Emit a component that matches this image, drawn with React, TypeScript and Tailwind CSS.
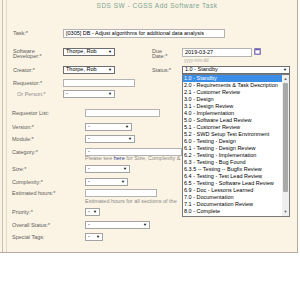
import React from 'react'

const statuses = [
  '1.0 - Standby',
  '2.0 - Requirements & Task Description',
  '2.1 - Customer Review',
  '3.0 - Design',
  '3.1 - Design Review',
  '4.0 - Implementation',
  '5.0 - Software Lead Review',
  '5.1 - Customer Review',
  '5.2 - SWD Setup Test Environment',
  '6.0 - Testing - Design',
  '6.1 - Testing - Design Review',
  '6.2 - Testing - Implementation',
  '6.3 - Testing - Bug Found',
  '6.3.5 -- Testing -- Bugfix Review',
  '6.4 - Testing - Test Lead Review',
  '6.5 - Testing - Software Lead Review',
  '6.9 - Doc - Lessons Learned',
  '7.0 - Documentation',
  '7.1 - Documentation Review',
  '8.0 - Complete',
]

function Sel({ w, value = '-', dark = false }: { w: string; value?: string; dark?: boolean }) {
  return (
    <div
      className={`flex h-[8px] shrink-0 items-center justify-between bg-white pl-[2px] pr-[2px] text-black border ${
        dark ? 'border-[#6d6d6d]' : 'border-[#a3a3a3]'
      } ${w}`}
    >
      <span className="whitespace-nowrap leading-none">{value}</span>
      <span className="text-[4px] leading-none">▼</span>
    </div>
  )
}

function Field({ w, value = '' }: { w: string; value?: string }) {
  return (
    <div className={`flex h-[8px] shrink-0 items-center overflow-hidden whitespace-nowrap border border-[#b3b3b3] bg-white pl-[2px] text-black ${w}`}>
      <span className="leading-none">{value}</span>
    </div>
  )
}

export default function App() {
  return (
    <div className="relative h-[287px] w-[300px] overflow-hidden bg-white font-['Liberation_Sans',Arial,sans-serif] text-[5.5px] text-[#5c5c5c]">
      {/* panel */}
      <div className="h-[253px] w-[298px] border-b border-r border-[#b5ad9d] bg-[#fbf4e4]">
        <div className="ml-[2px] h-full border-l border-[#c9c1b1]">
          <div className="ml-[3px] h-full border-l border-[#e2dacb]">
            {/* title */}
            <div className="h-[12px] pl-[10px] text-center text-[6.5px] leading-[12px] tracking-[0.5px] text-[#7ba493]">
              SDS SW - CGSS Add Software Task
            </div>

            {/* task */}
            <div className="mt-[17px] flex h-[9px] items-center">
              <div className="w-[56px] pl-[6px]">Task:*</div>
              <Field w="w-[162px] h-[9px]" value="[0305] DB - Adjust algorithms for additional data analysis" />
            </div>

            {/* developer + due date */}
            <div className="mt-[8px] flex h-[14px] items-start">
              <div className="flex w-[145px] items-start">
                <div className="mt-[3px] w-[56px] pl-[6px] leading-[5px]">
                  Software
                  <br />
                  Developer:*
                </div>
                <div className="mt-[2px]">
                  <Sel w="w-[52px]" value="Thorpe, Rob" dark />
                </div>
              </div>
              <div className="mt-[3px] w-[30px] leading-[5px]">
                Due
                <br />
                Date:*
              </div>
              <div className="mt-[2px]">
                <div className="flex items-start gap-[2px]">
                  <Field w="w-[70px] h-[9px]" value="2019-03-27" />
                  <svg width="7" height="7" viewBox="0 0 7 7" className="shrink-0">
                    <rect x="0" y="0" width="7" height="7" rx="1" fill="#8c7fbf" />
                    <rect x="1.5" y="2" width="4" height="3.5" fill="#ffffff" />
                    <rect x="1.5" y="1.2" width="4" height="1" fill="#5b4f99" />
                  </svg>
                </div>
                <div className="mt-[1px] pl-[2px] text-[4.5px] leading-[5px] text-[#a9a9a9]">yyyy-mm-dd</div>
              </div>
            </div>

            {/* creator + status */}
            <div className="mt-[6px] flex h-[8px] items-center">
              <div className="flex w-[145px] items-center">
                <div className="w-[56px] pl-[6px]">Creator:*</div>
                <Sel w="w-[52px]" value="Thorpe, Rob" dark />
              </div>
              <div className="w-[30px]">Status:*</div>
              <Sel w="w-[108px]" value="1.0 - Standby" dark />
            </div>

            {/* requestor */}
            <div className="mt-[5px] flex h-[8px] items-center">
              <div className="w-[56px] pl-[6px]">Requestor:*</div>
              <Field w="w-[72px]" />
            </div>
            <div className="mt-[3px] flex h-[8px] items-center">
              <div className="w-[56px] pl-[10px] text-[#8d8d8d]">Or Person:*</div>
              <Sel w="w-[52px]" />
            </div>

            {/* lower section */}
            <div className="mt-[11px] flex h-[8px] items-center">
              <div className="w-[78px] pl-[5px]">Requestor List:</div>
              <Field w="w-[75px]" />
            </div>
            <div className="mt-[6px] flex h-[8px] items-center">
              <div className="w-[78px] pl-[5px]">Version:*</div>
              <Sel w="w-[47px]" />
            </div>
            <div className="mt-[4px] flex h-[8px] items-center">
              <div className="w-[78px] pl-[5px]">Module:*</div>
              <Sel w="w-[50px]" />
            </div>
            <div className="mt-[5px] flex items-start">
              <div className="flex h-[8px] w-[78px] items-center pl-[5px]">Category:*</div>
              <div className="w-[97px]">
                <Field w="w-[97px]" value="-" />
                <div className="whitespace-nowrap leading-[5px] text-[#8a8a8a]">
                  Please see <span className="text-[#2b3f9e]">here</span> for Size, Complexity &amp;
                </div>
              </div>
            </div>
            <div className="mt-[4px] flex h-[8px] items-center">
              <div className="w-[78px] pl-[5px]">Size:*</div>
              <Sel w="w-[45px]" />
            </div>
            <div className="mt-[5px] flex h-[8px] items-center">
              <div className="w-[78px] pl-[5px]">Complexity:*</div>
              <Sel w="w-[43px]" />
            </div>
            <div className="mt-[3px] flex items-start">
              <div className="flex h-[8px] w-[78px] items-center pl-[5px]">Estimated hours:*</div>
              <div className="w-[97px]">
                <Field w="w-[72px]" />
                <div className="mt-[2px] whitespace-nowrap leading-[5px] text-[#8a8a8a]">
                  Estimated hours for all sections of the
                </div>
              </div>
            </div>
            <div className="mt-[4px] flex h-[8px] items-center">
              <div className="w-[78px] pl-[5px]">Priority:*</div>
              <Sel w="w-[15px]" />
            </div>
            <div className="mt-[5px] flex h-[8px] items-center">
              <div className="w-[78px] pl-[5px]">Overall Status:*</div>
              <Sel w="w-[65px]" />
            </div>
            <div className="mt-[4px] flex h-[8px] items-center">
              <div className="w-[78px] pl-[5px]">Special Tags:</div>
              <Sel w="w-[18px]" />
            </div>
          </div>
        </div>
      </div>

      {/* open status list */}
      <div className="absolute left-[182px] top-[74px] flex h-[143px] w-[108px] border border-[#7a7a7a] bg-white text-black">
        <div className="flex-1">
          {statuses.map((s, i) => (
            <div
              key={s}
              className={`h-[7px] whitespace-nowrap pl-[1px] leading-[7px] ${i === 0 ? 'bg-[#3b8ee8] text-white' : ''}`}
            >
              {s}
            </div>
          ))}
        </div>
        <div className="flex w-[7px] flex-col items-center bg-[#efefef]">
          <div className="h-[8px] text-[4px] leading-[8px] text-[#606060]">▲</div>
          <div className="h-[109px] w-[5px] rounded-[1px] bg-[#a9a9a9]" />
          <div className="flex-1" />
          <div className="h-[8px] text-[4px] leading-[8px] text-[#606060]">▼</div>
        </div>
      </div>
    </div>
  )
}
